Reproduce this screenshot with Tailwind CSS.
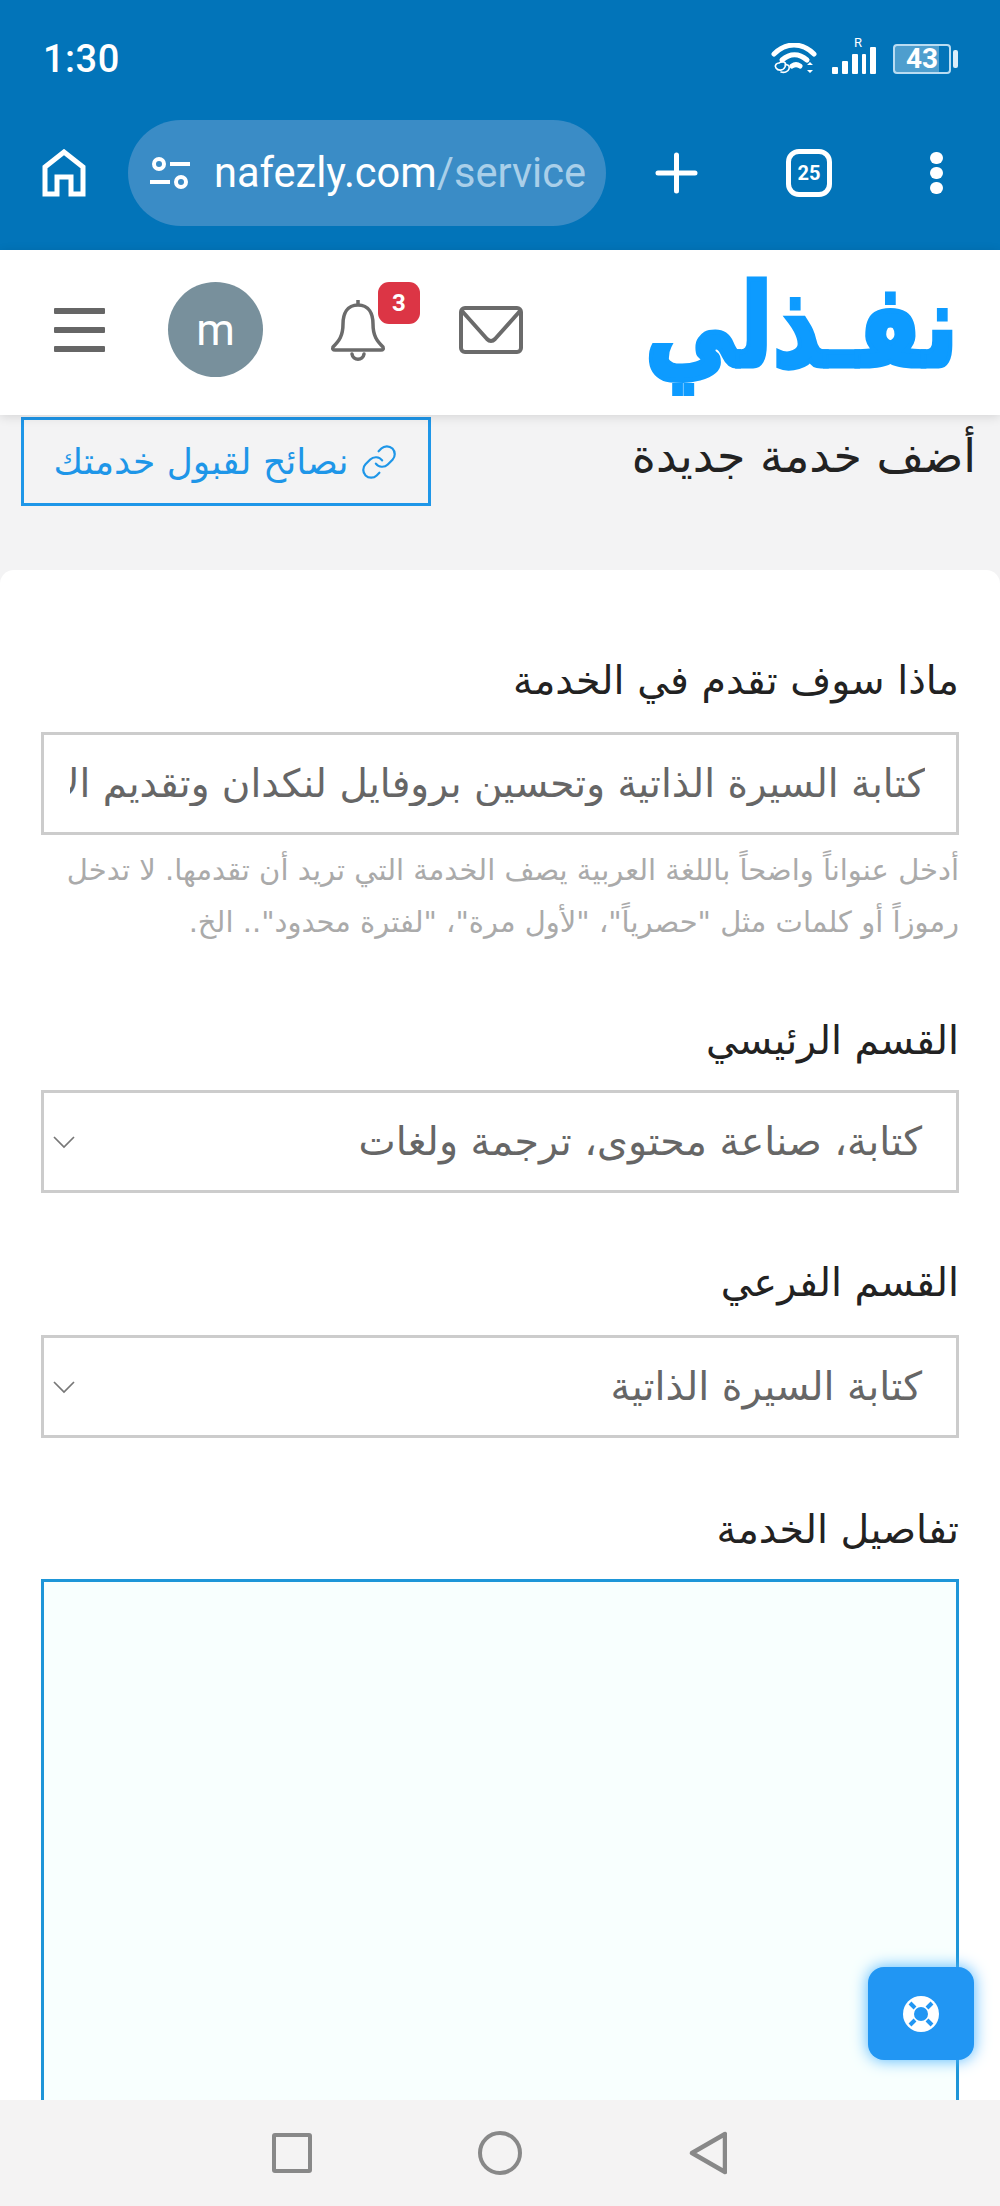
<!DOCTYPE html>
<html lang="ar">
<head>
  <meta charset="UTF-8" />
  <meta name="viewport" content="width=device-width, initial-scale=1" />
  <title>نفذلي | أضف خدمة جديدة</title>
  <script src="https://cdn.jsdelivr.net/npm/@tailwindcss/browser@4"></script>
</head>

<body class="bg-white font-['DejaVu_Sans',sans-serif]">
  <div class="relative w-[1000px] h-[2206px] overflow-hidden flex flex-col">

    <!-- Status bar and browser toolbar -->
    <div class="shrink-0 h-[250px] bg-[#0274b9] text-white font-['Roboto',sans-serif]">
      <div class="h-[118px] flex items-center justify-between pl-[43px] pr-[42px]">
        <span class="text-[38px] font-medium tracking-[0.5px] leading-[44px]">1:30</span>
        <div class="flex items-center">
          <svg class="w-[46px] h-[32px]" viewBox="0 0 46 32" fill="none" stroke="#fff" stroke-linecap="round">
            <path d="M3 11C15 -1 31 -1 43 11" stroke-width="5" />
            <path d="M11 17C19 10 28 10 36 17" stroke-width="5" />
            <path d="M21 23C24 21 26 21 29 23" stroke-width="5" />
            <path d="M8 20c5-3 8 0 6 4s-7 4-9 1 1-5 3-5z M14 22c3-1 5 1 4 4s-5 4-8 3" stroke-width="1.6" />
            <path d="M39 19l3 3h-6z M39 30l3-3h-6z" fill="#fff" stroke="none" />
          </svg>
          <div class="relative ml-[14px] w-[46px] h-[34px]">
            <svg class="w-[46px] h-[34px]" viewBox="0 0 46 34" fill="#fff">
              <rect x="1" y="25" width="6" height="7" rx="1" />
              <rect x="11" y="19" width="6" height="13" rx="1" />
              <rect x="21" y="12" width="6" height="20" rx="1" />
              <rect x="31" y="12" width="4" height="20" rx="1" />
              <rect x="39" y="5" width="6" height="27" rx="1" />
            </svg>
            <span class="absolute left-[23px] top-[-6px] text-[13px] leading-[14px]">R</span>
          </div>
          <div class="relative ml-[16px] w-[58px] h-[30px] rounded-[4px] border-2 border-[#b9dcf2] flex items-center justify-center">
            <div class="absolute inset-y-0 left-0 w-[44px] bg-white/30"></div>
            <span class="relative text-[28px] font-bold leading-[26px]">43</span>
          </div>
          <div class="ml-[2px] w-[5px] h-[18px] rounded-[2px] bg-[#dbeefa]"></div>
        </div>
      </div>
      <div class="mt-[2px] h-[106px] flex items-center pl-[42px]">
        <svg class="shrink-0 w-[44px] h-[48px]" viewBox="0 0 44 48" fill="none" stroke="#fff" stroke-width="5">
          <path d="M3 45V18L22 3L41 18V45H29V28H15V45Z" />
        </svg>
        <div class="ml-[42px] w-[478px] h-[106px] rounded-full bg-[#3a8cc6] flex items-center pl-[22px] overflow-hidden">
          <svg class="shrink-0 w-[40px] h-[32px]" viewBox="0 0 40 32" fill="none" stroke="#fff" stroke-width="4">
            <circle cx="9" cy="7" r="5" />
            <path d="M20 7H40M0 25H20" />
            <circle cx="31" cy="25" r="5" />
          </svg>
          <span class="ml-[24px] text-[41.6px] leading-[50px] whitespace-nowrap">nafezly.com<span class="text-[#a9cfe9]">/service</span></span>
        </div>
        <svg class="ml-[49px] shrink-0 w-[43px] h-[42px]" viewBox="0 0 43 42" stroke="#fff" stroke-width="5" stroke-linecap="round">
          <path d="M21.5 3V39M3 21H40" />
        </svg>
        <div class="ml-[88px] shrink-0 w-[46px] h-[48px] rounded-[13px] border-[5px] border-white flex items-center justify-center text-[20px] font-bold leading-none">25</div>
        <div class="ml-[98px] shrink-0 flex flex-col gap-[3px]">
          <div class="w-[13px] h-[12px] rounded-full bg-white"></div>
          <div class="w-[13px] h-[12px] rounded-full bg-white"></div>
          <div class="w-[13px] h-[12px] rounded-full bg-white"></div>
        </div>
      </div>
    </div>

    <!-- Site header -->
    <header class="relative z-10 shrink-0 h-[165px] bg-white shadow-[0_2px_10px_rgba(0,0,0,0.12)] flex items-center justify-between pl-[54px] pr-[42px] pb-[6px]">
      <div class="flex items-center">
        <div class="w-[51px] flex flex-col gap-[13px]">
          <div class="h-[6px] rounded-[1px] bg-[#666]"></div>
          <div class="h-[6px] rounded-[1px] bg-[#666]"></div>
          <div class="h-[6px] rounded-[1px] bg-[#666]"></div>
        </div>
        <div class="ml-[63px] w-[95px] h-[95px] rounded-full bg-[#78909c] flex items-center justify-center text-white text-[44px] leading-none font-['Roboto',sans-serif]">m</div>
        <div class="relative ml-[67px] w-[56px] h-[64px]">
          <svg class="w-[56px] h-[64px]" viewBox="0 0 56 64" fill="none" stroke="#6b6b6b" stroke-width="3.5" stroke-linejoin="round">
            <path d="M28 7C17 7 13 16 13 26C13 38 9 43 3 49Q2 52 5 52H51Q54 52 53 49C47 43 43 38 43 26C43 16 39 7 28 7ZM28 7V2" />
            <path d="M22 56C23 63 33 63 34 56" stroke-linecap="round" />
          </svg>
          <span class="absolute left-[48px] top-[-16px] w-[42px] h-[42px] rounded-[11px] bg-[#dc3545] text-white text-[24px] font-bold leading-none flex items-center justify-center font-['Roboto',sans-serif]">3</span>
        </div>
        <svg class="ml-[73px] w-[64px] h-[48px]" viewBox="0 0 64 48" fill="none" stroke="#6b6b6b" stroke-width="4" stroke-linejoin="round">
          <rect x="2" y="2" width="60" height="44" rx="4" />
          <path d="M3 5L28 33Q32 37 36 33L61 5" />
        </svg>
      </div>
      <div dir="rtl" class="-mt-[6px] text-[#0d9bff] text-[92px] font-bold leading-[100px] scale-y-125 [-webkit-text-stroke:4px_#0d9bff]">نفـذلي</div>
    </header>

    <!-- Page content -->
    <main dir="rtl" class="relative flex-1 min-h-0 overflow-hidden bg-[#f3f3f4]">
      <div class="h-[155px] flex items-start justify-between pr-[24px] pl-[21px] pt-[2px]">
        <h1 class="mt-[13px] text-[46px] leading-[52px] font-normal text-[#222]">أضف خدمة جديدة</h1>
        <a class="w-[410px] h-[89px] border-[3px] border-[#1e96e8] flex items-center justify-center gap-[12px] text-[#1e96e8] text-[36px] leading-[50px]">
          <svg class="w-[38px] h-[38px]" viewBox="0 0 24 24" fill="none" stroke="#1e96e8" stroke-width="1.4" stroke-linecap="round" stroke-linejoin="round">
            <path d="M10 13a5 5 0 0 0 7.54.54l3-3a5 5 0 0 0-7.07-7.07l-1.72 1.71" />
            <path d="M14 11a5 5 0 0 0-7.54-.54l-3 3a5 5 0 0 0 7.07 7.07l1.71-1.71" />
          </svg>
          <span>نصائح لقبول خدمتك</span>
        </a>
      </div>

      <div class="h-[1600px] rounded-t-[14px] bg-white px-[41px] pt-[81px]">
        <label class="block text-[39.5px] leading-[58px] text-[#222]">ماذا سوف تقدم في الخدمة</label>
        <input class="mt-[23px] block w-full h-[103px] border-[3px] border-[#ccc] bg-white pr-[31px] pl-[26px] text-[39px] text-[#666] font-['DejaVu_Sans',sans-serif] outline-none" value="كتابة السيرة الذاتية وتحسين بروفايل لنكدان وتقديم الاستشارات" />
        <p class="mt-[9px] text-[29px] leading-[52px] text-[#aaa]">أدخل عنواناً واضحاً باللغة العربية يصف الخدمة التي تريد أن تقدمها. لا تدخل<br />رموزاً أو كلمات مثل "حصرياً"، "لأول مرة"، "لفترة محدود".. الخ.</p>

        <label class="mt-[63px] block text-[39.5px] leading-[58px] text-[#222]">القسم الرئيسي</label>
        <div class="mt-[21px] h-[103px] border-[3px] border-[#ccc] flex items-center justify-between pr-[34px] pl-[8px] text-[39.5px] text-[#666]">
          <span>كتابة، صناعة محتوى، ترجمة ولغات</span>
          <svg class="w-[24px] h-[14px]" viewBox="0 0 24 14" fill="none" stroke="#777" stroke-width="1.7"><path d="M2 2L12 12L22 2" /></svg>
        </div>

        <label class="mt-[60px] block text-[39.5px] leading-[58px] text-[#222]">القسم الفرعي</label>
        <div class="mt-[24px] h-[103px] border-[3px] border-[#ccc] flex items-center justify-between pr-[34px] pl-[8px] text-[39.5px] text-[#666]">
          <span>كتابة السيرة الذاتية</span>
          <svg class="w-[24px] h-[14px]" viewBox="0 0 24 14" fill="none" stroke="#777" stroke-width="1.7"><path d="M2 2L12 12L22 2" /></svg>
        </div>

        <label class="mt-[62px] block text-[39.5px] leading-[58px] text-[#222]">تفاصيل الخدمة</label>
        <textarea class="mt-[21px] block w-full h-[700px] border-[3px] border-[#1e96d8] bg-[#f8fffe] outline-none resize-none"></textarea>
      </div>
    </main>

    <!-- Help button -->
    <button class="absolute left-[868px] top-[1967px] z-20 w-[106px] h-[93px] rounded-[16px] bg-[#2196f3] shadow-[0_0_16px_#4db5ff] flex items-center justify-center">
      <svg class="w-[38px] h-[38px]" viewBox="0 0 38 38">
        <circle cx="19" cy="19" r="18" fill="#fff" />
        <circle cx="19" cy="19" r="7" fill="#2196f3" />
        <path d="M8 8L13 13M30 8L25 13M8 30L13 25M30 30L25 25" stroke="#2196f3" stroke-width="4" />
      </svg>
    </button>

    <!-- Android navigation bar -->
    <nav class="relative z-10 shrink-0 h-[106px] bg-[#f4f3f3] flex items-center pl-[272px]">
      <div class="w-[40px] h-[40px] rounded-[3px] border-[4px] border-[#888]"></div>
      <div class="ml-[166px] w-[44px] h-[44px] rounded-full border-[4px] border-[#888]"></div>
      <svg class="ml-[167px] w-[38px] h-[44px]" viewBox="0 0 38 44" fill="none" stroke="#888" stroke-width="4.5" stroke-linejoin="round">
        <path d="M36 3V41L3 22Z" />
      </svg>
    </nav>
  </div>
</body>
</html>
